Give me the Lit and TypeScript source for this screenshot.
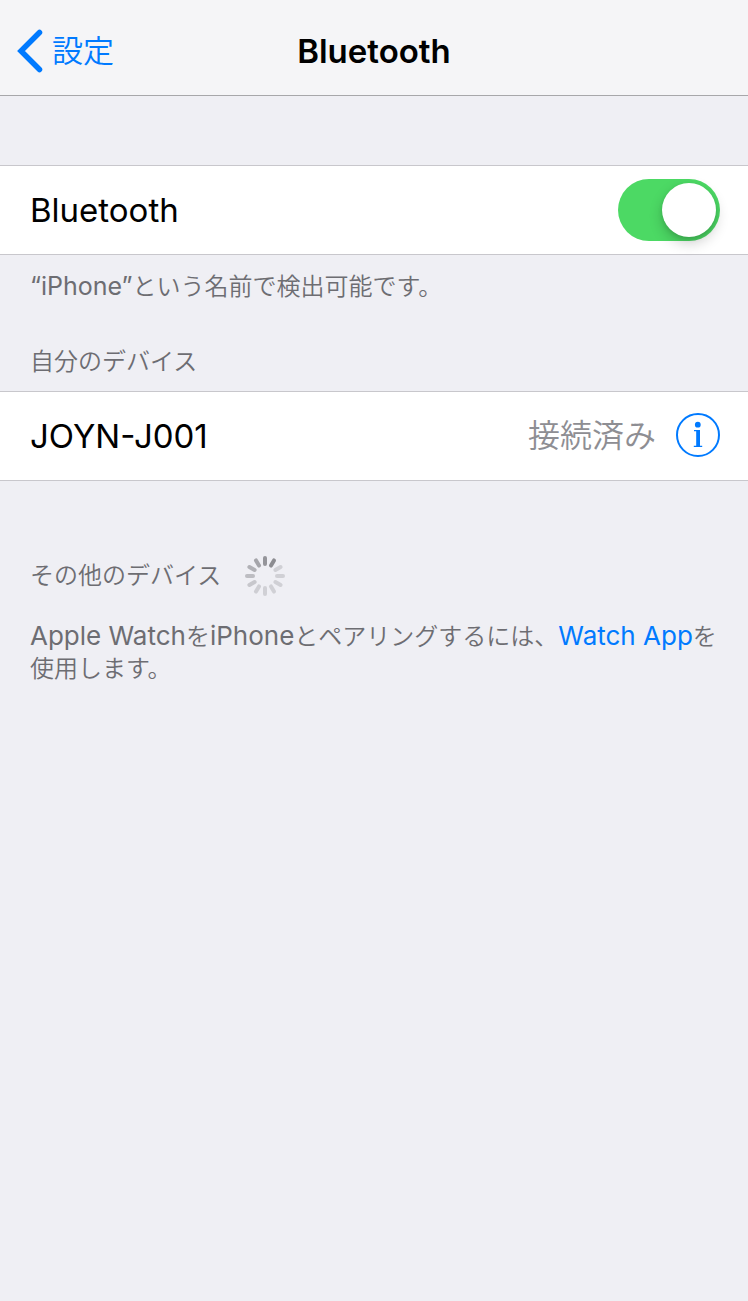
import { LitElement, html, css, svg } from "lit";
import { customElement, state } from "lit/decorators.js";

@customElement("activity-spinner")
class ActivitySpinner extends LitElement {
  static styles = css`
    :host { display: block; }
    svg { display: block; width: 40px; height: 40px; }
  `;
  // Opacity of each blade, clockwise from twelve o'clock.
  private blades = [0.9, 1, 0.3, 0.3, 0.3, 0.3, 0.3, 0.32, 0.4, 0.5, 0.62, 0.74];
  render() {
    return html`<svg viewBox="-20 -20 40 40" role="img" aria-label="検索中">
      ${this.blades.map((o, i) => svg`<line x1="0" y1="-18" x2="0" y2="-12" stroke="#8c8c91"
        stroke-width="4" stroke-linecap="round" opacity=${o} transform="rotate(${i * 30})"/>`)}
    </svg>`;
  }
}

@customElement("app-root")
class AppRoot extends LitElement {
  static styles = css`
    :host {
      display: block;
      min-height: 100vh;
      background: #efeff4;
      color: #000;
      font-family: Inter, "Noto Sans CJK JP", sans-serif;
      font-size: 33px;
      line-height: 40px;
    }
    a { color: #007aff; text-decoration: none; }
    h1, h2, p { margin: 0; font: inherit; }
    .bar {
      display: grid;
      grid-template-columns: 1fr auto 1fr;
      align-items: center;
      padding: 7px 16px 0;
      height: 88px;
      background: #f5f5f7;
      border-bottom: 1px solid #a7a7aa;
    }
    .bar h1 { font-weight: 600; }
    .back {
      display: flex;
      align-items: center;
      gap: 8px;
      justify-self: start;
      font-size: 31px;
      font-weight: 350;
    }
    .back svg { width: 28px; height: 44px; }
    .row {
      display: flex;
      align-items: center;
      height: 88px;
      padding: 0 28px 0 30px;
      background: #fff;
      border: solid #c8c7cc;
      border-width: 1px 0;
    }
    .first { margin-top: 69px; }
    .label { flex: 1; }
    .switch {
      appearance: none;
      display: flex;
      align-items: center;
      width: 102px;
      height: 62px;
      margin: 0;
      padding: 4px;
      box-sizing: border-box;
      border-radius: 31px;
      background: #e5e5ea;
      cursor: pointer;
    }
    .switch::before {
      content: "";
      width: 54px;
      height: 54px;
      border-radius: 50%;
      background: #fff;
      box-shadow: 0 6px 14px rgba(0, 0, 0, 0.2), 0 2px 4px rgba(0, 0, 0, 0.1);
    }
    .switch:checked { background: #4cd964; justify-content: flex-end; }
    .status { color: #8e8e93; font-size: 32px; font-weight: 350; margin-right: 20px; }
    .info { padding: 0 0 2px; border: 0; background: none; display: block; cursor: pointer; }
    .info svg { display: block; width: 44px; height: 44px; }
    .note {
      padding: 0 30px;
      color: #6d6d72;
      font-size: 24px;
      line-height: 32px;
      font-weight: 350;
    }
    .latin { font-size: 26px; font-weight: 400; }
    .hint .latin { font-size: 25px; }
    .hint { padding-top: 15px; }
    .mine { padding-top: 43px; padding-bottom: 13px; }
    .others { display: flex; align-items: center; gap: 24px; padding-top: 75px; }
    .pairing { padding-top: 24px; }
  `;

  @state() private on = true;

  render() {
    return html`
      <header class="bar">
        <a class="back" href="#settings">
          <svg viewBox="0 0 28 44" fill="none" stroke="#007aff" stroke-width="5.500" stroke-linecap="round">
            <path d="M23.500 3.500 L5 22 L23.500 40.500" stroke-linejoin="miter"/>
          </svg>
          <span>設定</span>
        </a>
        <h1>Bluetooth</h1>
      </header>
      <main>
        <div class="row first">
          <label class="label" for="power">Bluetooth</label>
          <input class="switch" id="power" type="checkbox" role="switch" .checked=${this.on}
            @change=${(e: Event) => (this.on = (e.target as HTMLInputElement).checked)}>
        </div>
        <p class="note hint"><span class="latin">“iPhone”</span>という名前で検出可能です。</p>
        <h2 class="note mine">自分のデバイス</h2>
        <div class="row">
          <span class="label">JOYN-J001</span>
          <span class="status">接続済み</span>
          <button class="info" aria-label="詳細">
            <svg viewBox="0 0 44 44" fill="#007aff">
              <circle cx="22" cy="22" r="21" fill="none" stroke="#007aff" stroke-width="2"/>
              <circle cx="21.800" cy="11.700" r="2.900"/>
              <path d="M18 17h6v15.700h2.200V34H17.800v-1.300H20.200V18.300H18z"/>
            </svg>
          </button>
        </div>
        <div class="note others"><h2>その他のデバイス</h2><activity-spinner></activity-spinner></div>
        <p class="note pairing"><span class="latin">Apple Watch</span>を<span class="latin">iPhone</span>とペアリングするには、<a class="latin" href="#watch">Watch App</a>を使用します。</p>
      </main>
    `;
  }
}
